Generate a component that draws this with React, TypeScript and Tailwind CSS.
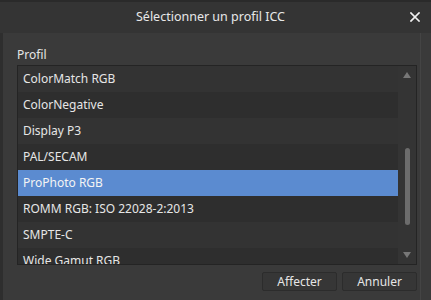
const profiles = [
  "ColorMatch RGB",
  "ColorNegative",
  "Display P3",
  "PAL/SECAM",
  "ProPhoto RGB",
  "ROMM RGB: ISO 22028-2:2013",
  "SMPTE-C",
  "Wide Gamut RGB",
];

const selected = "ProPhoto RGB";

export default function App() {
  return (
    <div
      className="flex h-[300px] w-[431px] flex-col overflow-hidden bg-[#3a3a3a] text-[#e6e6e6]"
      style={{ fontFamily: '"Noto Sans", "Open Sans", sans-serif' }}
    >
      {/* title bar */}
      <div className="flex h-[33px] shrink-0 flex-col bg-[#343434]">
        <div className="h-[2px] bg-[#2a2a2a]" />
        <div className="relative flex flex-1 items-center justify-center pr-[10px]">
          <span className="text-[12.5px] text-[#e8e8e8]">Sélectionner un profil ICC</span>
          <svg className="absolute right-[11px] top-[10px]" width="10" height="10" viewBox="0 0 10 10">
            <path d="M1 1 L9 9 M9 1 L1 9" stroke="#f0f0f0" strokeWidth="1.7" strokeLinecap="square" />
          </svg>
        </div>
      </div>

      <div className="flex flex-1">
        <div className="w-[3px] bg-[#2e2e2e]" />
        <div className="flex w-[417px] flex-col pl-[14px] pr-[3px]">
          <div className="pt-[12px] text-[12px] leading-[20px] text-[#e6e6e6]">Profil</div>

          {/* list */}
          <div className="flex h-[200px] border border-[#242424] bg-[#303030]">
            <div className="flex flex-1 flex-col overflow-hidden">
              {profiles.map((p, i) => (
                <div
                  key={p}
                  className={
                    "flex h-[26px] shrink-0 items-center pl-[5px] text-[12px] " +
                    (p === selected
                      ? "bg-[#5b8bd0] text-[#f4f4f4]"
                      : i % 2 === 0
                        ? "bg-[#333333] text-[#e6e6e6]"
                        : "bg-[#2e2e2e] text-[#e6e6e6]")
                  }
                >
                  {p}
                </div>
              ))}
            </div>
            {/* scrollbar */}
            <div className="flex w-[18px] flex-col items-center bg-[#343434] py-[6px]">
              <svg width="8" height="6" viewBox="0 0 8 6">
                <path d="M4 0 L8 6 L0 6 Z" fill="#777777" />
              </svg>
              <div className="mt-[70px] h-[77px] w-[5px] rounded-full bg-[#6c6c6c]" />
              <div className="flex-1" />
              <svg width="8" height="6" viewBox="0 0 8 6">
                <path d="M0 0 L8 0 L4 6 Z" fill="#777777" />
              </svg>
            </div>
          </div>

          {/* buttons */}
          <div className="flex justify-end gap-[5px] pt-[7px]">
            <button className="h-[19px] w-[75px] rounded-[2px] border border-[#2c2c2c] bg-[#363636] text-[12px] leading-none text-[#e6e6e6]">
              Affecter
            </button>
            <button className="h-[19px] w-[75px] rounded-[2px] border border-[#2c2c2c] bg-[#363636] text-[12px] leading-none text-[#e6e6e6]">
              Annuler
            </button>
          </div>
        </div>
        <div className="w-px bg-[#444444]" />
        <div className="flex-1" />
      </div>
    </div>
  );
}
